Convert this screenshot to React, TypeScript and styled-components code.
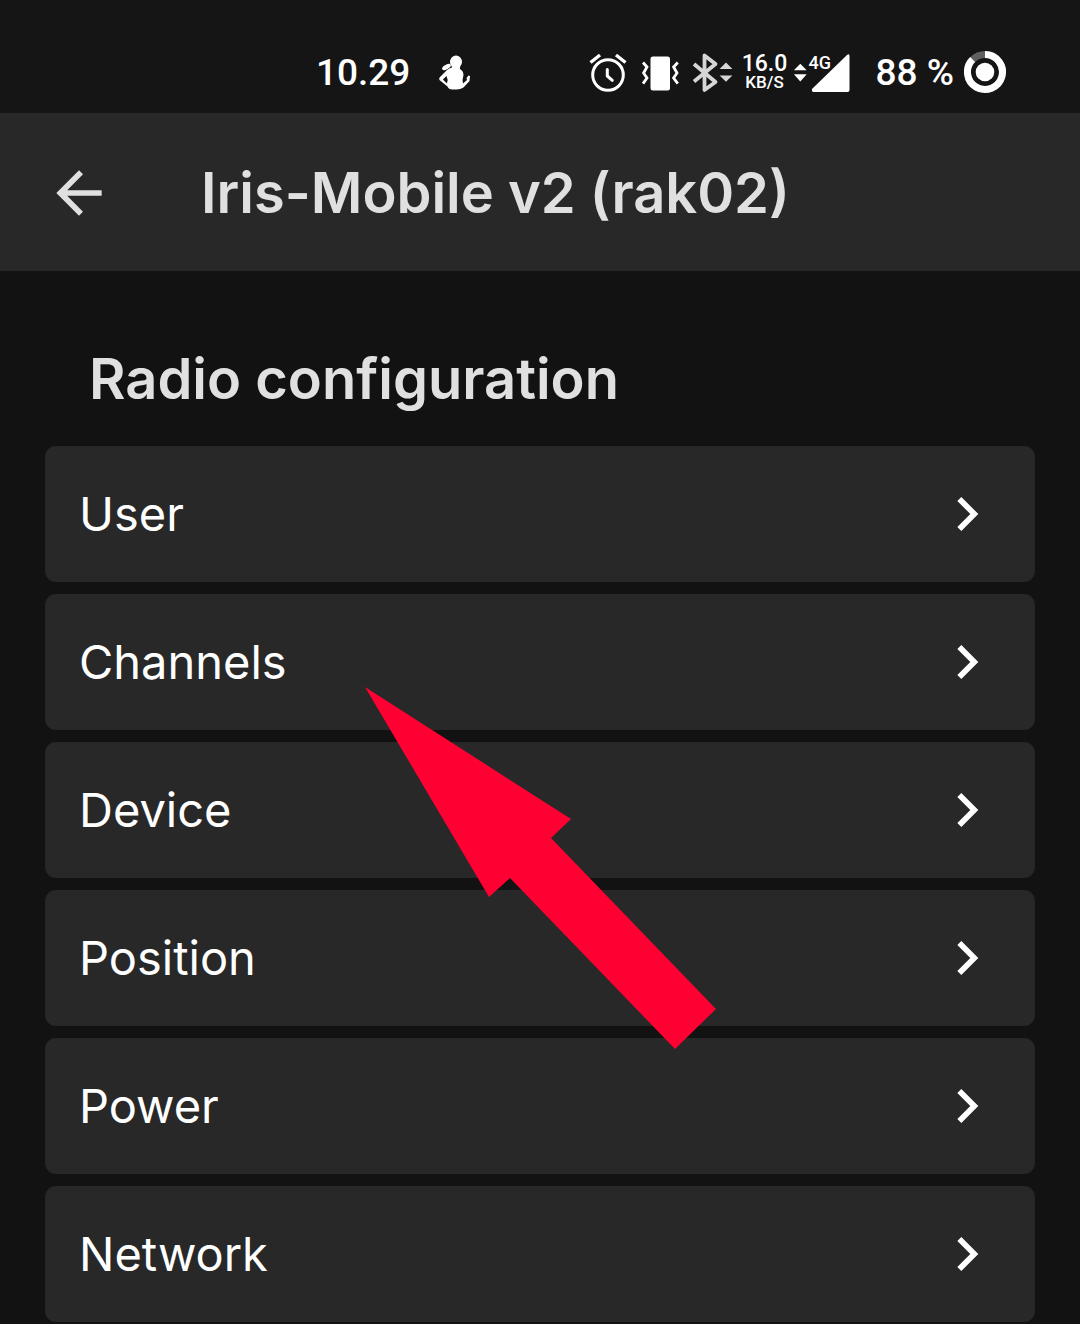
import React from "react";
import styled, { createGlobalStyle } from "styled-components";

const GlobalStyle = createGlobalStyle`
  *, *::before, *::after { box-sizing: border-box; }
  body {
    margin: 0;
    background: #121212;
    color: #e0e0e0;
    font-family: Inter, "Liberation Sans", sans-serif;
  }
`;

const Screen = styled.div`
  display: flex;
  flex-direction: column;
  overflow: hidden;
`;

const StatusBar = styled.div`
  display: flex;
  align-items: center;
  justify-content: space-between;
  height: 113px;
  padding: 32px 74px 0 316px;
  background: #151515;
  color: #fff;
  font-family: Roboto, sans-serif;
  font-weight: 500;
`;

const StatusGroup = styled.div<{ $gap: number }>`
  display: flex;
  align-items: center;
  gap: ${(p) => p.$gap}px;
`;

const StatusText = styled.span`
  font-size: 37px;
  line-height: 44px;
  white-space: nowrap;
`;

const Speed = styled.div`
  display: flex;
  flex-direction: column;
  align-items: center;
  width: 48px;
`;

const SpeedLine = styled.span<{ $size: number }>`
  font-size: ${(p) => p.$size}px;
  line-height: 19px;
`;

const Signal = styled.div`
  position: relative;
  display: flex;
`;

const NetworkBadge = styled.span`
  position: absolute;
  top: 2px;
  left: 17px;
  font-size: 18px;
  line-height: 20px;
`;

const AppBar = styled.header`
  display: flex;
  align-items: center;
  gap: 88px;
  min-height: 158px;
  padding: 2px 45px 0;
  background: #282828;
`;

const IconButton = styled.button`
  display: flex;
  padding: 0;
  border: 0;
  background: none;
  color: #e0e0e0;
  cursor: pointer;
`;

const Title = styled.h1`
  margin: 0;
  font-size: 56px;
  font-weight: 600;
  line-height: 72px;
`;

const Content = styled.main`
  padding: 72px 45px 2px;
`;

const SectionTitle = styled.h2`
  margin: 0 0 31px;
  padding: 0 44px;
  font-size: 56px;
  font-weight: 600;
  line-height: 72px;
`;

const List = styled.ul`
  display: flex;
  flex-direction: column;
  gap: 12px;
  margin: 0;
  padding: 0;
  list-style: none;
`;

const Item = styled.li`
  position: relative;
`;

const Row = styled.button`
  display: flex;
  align-items: center;
  justify-content: space-between;
  width: 100%;
  min-height: 136px;
  padding: 0 34px;
  border: 0;
  border-radius: 11px;
  background: #282828;
  color: #fff;
  font-family: inherit;
  font-size: 47px;
  line-height: 60px;
  text-align: left;
  cursor: pointer;
`;

const Pointer = styled.svg`
  position: absolute;
  z-index: 1;
  top: 93px;
  left: 320px;
  pointer-events: none;
`;

const PersonIcon = () => (
  <svg width="40" height="44" viewBox="0 0 40 44" fill="#fff" aria-hidden="true">
    <ellipse cx="22" cy="11" rx="6" ry="6.500" />
    <ellipse cx="12.500" cy="16" rx="4.800" ry="2.200" transform="rotate(-28 12.500 16)" />
    <path
      fillRule="evenodd"
      d="M18 14h8v4q3.500 2 3.500 6l-1 5 .5 3.500 4-3.500-.5-2 2-2.500 1.500.5-.5 5-6 6.500q-3 2-7 2h-4q-4 0-5-3l-8-6.500q-1-1.500.5-3l7-7q2-2 5-2.500zM12.500 25l-3.600 3.500 4 4 .8-3.500z"
    />
  </svg>
);

const AlarmIcon = () => (
  <svg width="40" height="44" viewBox="0 0 40 44" fill="none" stroke="#fff" strokeLinecap="round" strokeLinejoin="round" aria-hidden="true">
    <circle cx="20" cy="24" r="15.300" strokeWidth="3" />
    <path d="M19.300 18.500V25l5 4.300" strokeWidth="3" />
    <path d="M2.500 11.500L12 4M28 4l9.500 7.500" strokeWidth="3.400" strokeLinecap="butt" />
  </svg>
);

const VibrateIcon = () => (
  <svg width="42" height="44" viewBox="0 0 42 44" fill="none" stroke="#fff" strokeWidth="2.800" aria-hidden="true">
    <rect x="11.500" y="5.500" width="19.500" height="34" rx="2.500" fill="#fff" stroke="none" />
    <path d="M4 11.500L8 16l-3.400 6L8 27l-4 5.600M38.800 11.500L34.600 16l3.400 6-3.400 5 4.200 5.600" />
  </svg>
);

const BluetoothIcon = () => (
  <svg width="42" height="44" viewBox="0 0 42 44" aria-hidden="true">
    <path
      d="M2 13l21.500 18-11 8V4.500l11 8.500L2 30.500"
      fill="none"
      stroke="#d6d6d6"
      strokeWidth="3.800"
      strokeLinejoin="round"
    />
    <path d="M34 11.500l6.400 6.500H27.600zM27.600 24.400h12.800L34 30.800z" fill="#d6d6d6" />
  </svg>
);

const SignalIcon = () => (
  <svg width="58" height="44" viewBox="0 0 58 44" fill="#fff" aria-hidden="true">
    <path d="M8.300 12.700l6.400 6.500H1.900zM1.900 23.200h12.800L8.300 30.500z" />
    <path d="M20 38L55 4q2.500-2 2.500 1v34q0 2-2 2H21.500q-2 0-1.500-3z" />
  </svg>
);

const BatteryIcon = () => (
  <svg width="42" height="44" viewBox="0 0 42 44" fill="none" strokeWidth="7" aria-hidden="true">
    <circle cx="21" cy="21" r="17.500" stroke="#606060" />
    <path d="M21 3.500A17.500 17.500 0 1 1 8.600 8.600" stroke="#fff" />
    <circle cx="21" cy="21" r="9.300" fill="#fff" />
  </svg>
);

const BackIcon = () => (
  <svg width="68" height="68" viewBox="0 0 24 24" fill="currentColor" aria-hidden="true">
    <path d="M20 11H7.830l5.590-5.590L12 4l-8 8 8 8 1.410-1.410L7.830 13H20v-2z" />
  </svg>
);

const ChevronIcon = () => (
  <svg width="68" height="68" viewBox="0 0 24 24" fill="currentColor" aria-hidden="true">
    <path d="M10 6L8.590 7.410 13.170 12l-4.580 4.590L10 18l6-6z" />
  </svg>
);

const sections = ["User", "Channels", "Device", "Position", "Power", "Network"];

export default function App() {
  return (
    <Screen>
      <GlobalStyle />
      <StatusBar>
        <StatusGroup $gap={24}>
          <StatusText>10.29</StatusText>
          <PersonIcon />
        </StatusGroup>
        <StatusGroup $gap={7}>
          <StatusGroup $gap={11}>
            <AlarmIcon />
            <VibrateIcon />
            <BluetoothIcon />
          </StatusGroup>
          <StatusGroup $gap={26}>
            <StatusGroup $gap={3}>
              <Speed>
                <SpeedLine $size={23}>16.0</SpeedLine>
                <SpeedLine $size={17}>KB/S</SpeedLine>
              </Speed>
              <Signal>
                <SignalIcon />
                <NetworkBadge>4G</NetworkBadge>
              </Signal>
            </StatusGroup>
            <StatusGroup $gap={10}>
              <StatusText>88 %</StatusText>
              <BatteryIcon />
            </StatusGroup>
          </StatusGroup>
        </StatusGroup>
      </StatusBar>
      <AppBar>
        <IconButton type="button" aria-label="Back">
          <BackIcon />
        </IconButton>
        <Title>Iris-Mobile v2 (rak02)</Title>
      </AppBar>
      <Content>
        <SectionTitle>Radio configuration</SectionTitle>
        <List>
          {sections.map((name) => (
            <Item key={name}>
              <Row type="button">
                {name}
                <ChevronIcon />
              </Row>
              {name === "Channels" && (
                <Pointer width="352" height="363" viewBox="0 0 352 363" aria-hidden="true">
                  <path d="M0 0L206 132 186 151 351 322 310 362 145 191 124 210z" fill="#ff0033" />
                </Pointer>
              )}
            </Item>
          ))}
        </List>
      </Content>
    </Screen>
  );
}
